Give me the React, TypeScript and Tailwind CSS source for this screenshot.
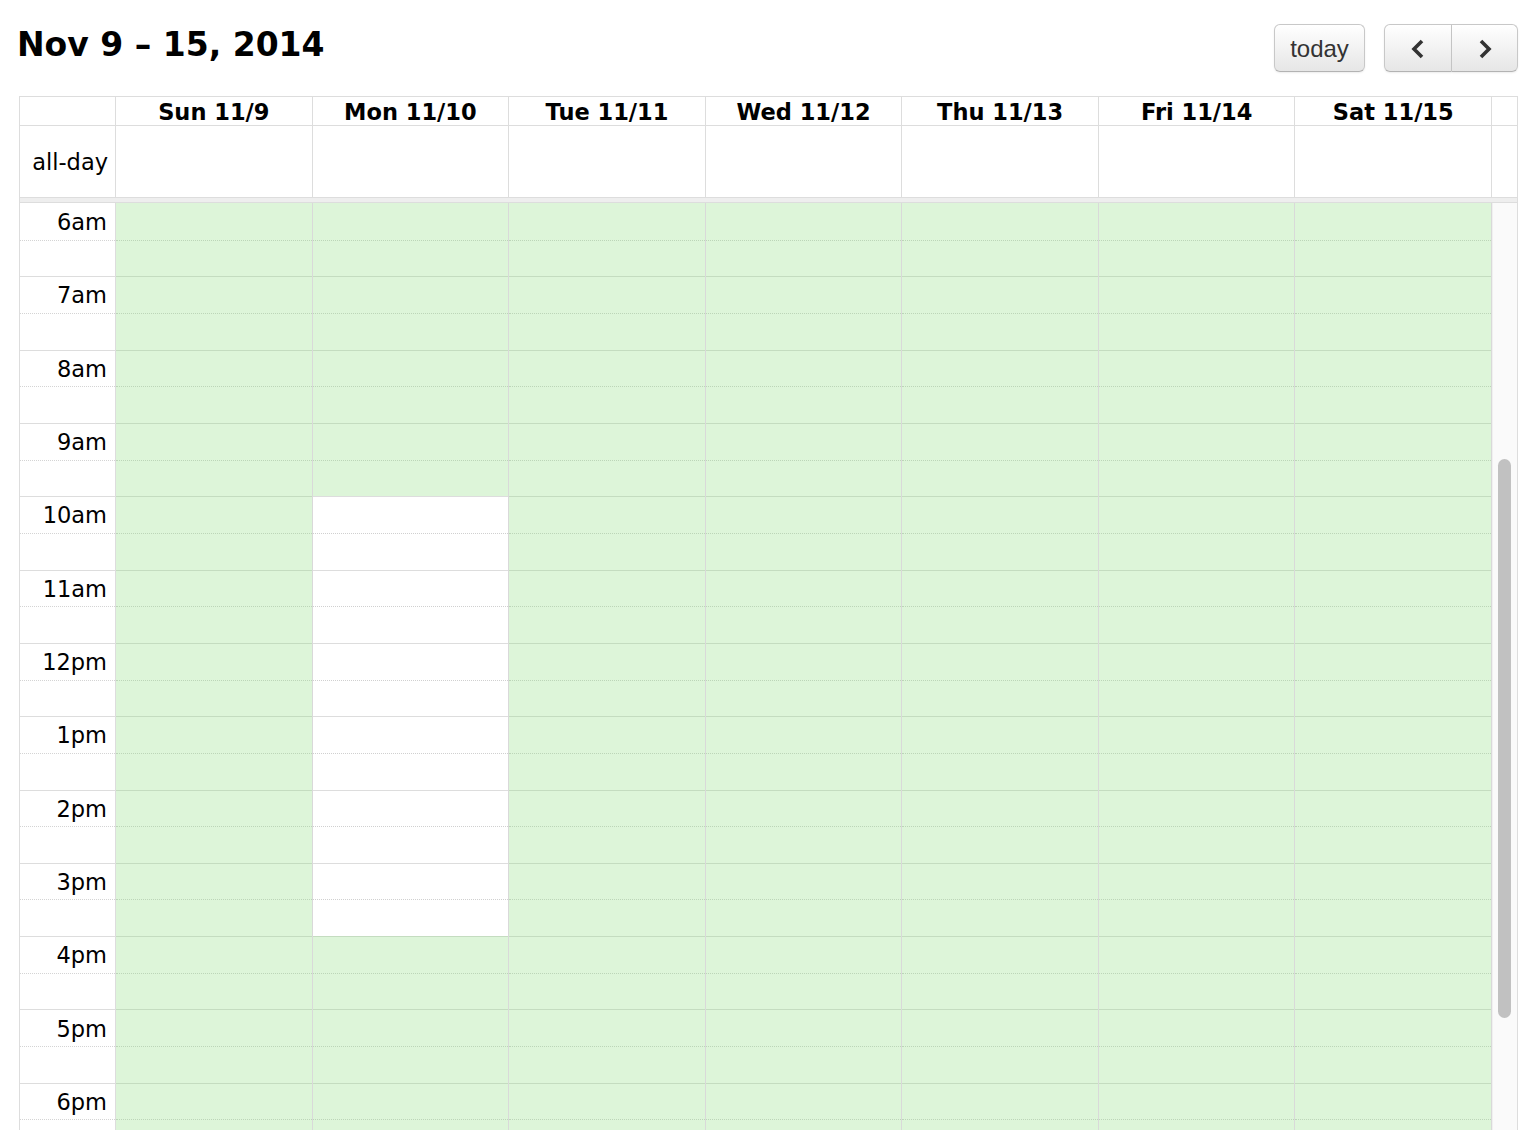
import React from "react";

const days = ["Sun 11/9", "Mon 11/10", "Tue 11/11", "Wed 11/12", "Thu 11/13", "Fri 11/14", "Sat 11/15"];
const hours = [6, 7, 8, 9, 10, 11, 12, 13, 14, 15, 16, 17, 18];

function label(h: number) {
  if (h === 12) return "12pm";
  if (h > 12) return `${h - 12}pm`;
  return `${h}am`;
}

function isGreen(d: number, h: number) {
  return !(d === 1 && h >= 10 && h < 16);
}

function Chevron({ dir }: { dir: "left" | "right" }) {
  return (
    <svg width="16" height="22" viewBox="0 0 16 22">
      <polyline
        points={dir === "left" ? "12,3 4,11 12,19" : "4,3 12,11 4,19"}
        fill="none"
        stroke="#333"
        strokeWidth="3.6"
        strokeLinecap="butt"
        strokeLinejoin="miter"
      />
    </svg>
  );
}

export default function App() {
  return (
    <div className="w-[1530px] h-[1144px] bg-white pl-[19px] font-['DejaVu_Sans',sans-serif] text-black overflow-hidden">
      {/* toolbar */}
      <div className="flex w-[1499px] h-[96px] items-start">
        <h2 className="mt-[28px] ml-[-2px] text-[33px] font-bold leading-[33px] tracking-[0px]">Nov 9 – 15, 2014</h2>
        <div className="ml-auto mt-[24px] flex items-start font-['Liberation_Sans',Arial,sans-serif]">
          <button className="w-[91px] h-[48px] rounded-[6px] border border-[#c8c8c8] border-b-[#b3b3b3] bg-gradient-to-b from-white to-[#e6e6e6] shadow-[inset_0_1px_0_rgba(255,255,255,0.3),0_1px_2px_rgba(0,0,0,0.08)] text-[24px] text-[#333] leading-none pt-[1px]">
            today
          </button>
          <div className="ml-[19px] flex">
            <button className="w-[68px] h-[48px] rounded-l-[6px] border border-[#c8c8c8] border-b-[#b3b3b3] bg-gradient-to-b from-white to-[#e6e6e6] shadow-[0_1px_2px_rgba(0,0,0,0.08)] flex items-center justify-center pt-[2px]">
              <Chevron dir="left" />
            </button>
            <button className="w-[66px] h-[48px] rounded-r-[6px] border border-l-0 border-[#c8c8c8] border-b-[#b3b3b3] bg-gradient-to-b from-white to-[#e6e6e6] shadow-[0_1px_2px_rgba(0,0,0,0.08)] flex items-center justify-center pt-[2px]">
              <Chevron dir="right" />
            </button>
          </div>
        </div>
      </div>

      {/* calendar table */}
      <div className="w-[1499px] border-l border-r border-t border-[#ddd]">
        {/* header row */}
        <div className="flex h-[29px] border-b border-[#ddd]">
          <div className="w-[96px] border-r border-[#ddd]"></div>
          {days.map((d) => (
            <div key={d} className="flex-1 border-r border-[#ddd] flex items-center justify-center text-[22.5px] font-bold leading-none pt-[2px]">
              {d}
            </div>
          ))}
          <div className="w-[25px]"></div>
        </div>
        {/* all-day row */}
        <div className="flex h-[71px]">
          <div className="w-[96px] border-r border-[#ddd] flex items-center justify-end pr-[7px] text-[22.5px] leading-none pt-[1px]">
            all-day
          </div>
          {days.map((d) => (
            <div key={d} className="flex-1 border-r border-[#ddd]"></div>
          ))}
          <div className="w-[25px]"></div>
        </div>
        {/* divider */}
        <div className="h-[6px] border-t border-b border-[#ddd] bg-[#eee]"></div>
        {/* body */}
        <div className="flex h-[927px] overflow-hidden">
          <div className="w-[96px] shrink-0 border-r border-[#ddd] flex flex-col">
            {hours.map((h, i) => (
              <div key={h} className="shrink-0">
                <div className={`h-[36.667px] flex items-center justify-end pr-[8px] text-[22.5px] leading-none pt-[1px] ${i > 0 ? "border-t border-[#ddd]" : ""}`}>
                  {label(h)}
                </div>
                <div className="h-[36.667px] border-t border-dotted border-[#d4d4d4]"></div>
              </div>
            ))}
          </div>
          {days.map((d, di) => (
            <div key={d} className="flex-1 border-r border-[#d9d9d9] flex flex-col">
              {hours.map((h, i) => {
                const g = isGreen(di, h);
                return (
                  <div key={h} className="shrink-0">
                    <div
                      className={`h-[36.667px] ${i > 0 ? "border-t" : ""} ${g ? "bg-[#ddf5d9] border-[#c4dcc0]" : "bg-white border-[#ddd]"}`}
                    ></div>
                    <div
                      className={`h-[36.667px] border-t border-dotted ${g ? "bg-[#ddf5d9] border-[#bcd5b8]" : "bg-white border-[#d0d0d0]"}`}
                    ></div>
                  </div>
                );
              })}
            </div>
          ))}
          <div className="w-[25px] shrink-0 bg-[#fafafa] border-l border-[#f0f0f0] flex flex-col">
            <div className="mt-[256px] ml-[5px] w-[13px] h-[559px] rounded-full bg-[#c1c1c1]"></div>
          </div>
        </div>
      </div>
    </div>
  );
}
